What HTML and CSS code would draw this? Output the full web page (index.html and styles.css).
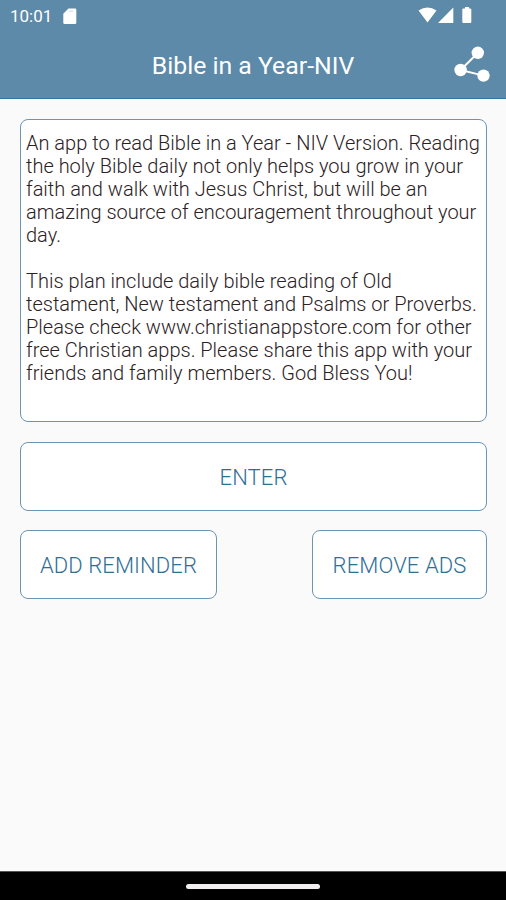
FILE: index.html
```
<!DOCTYPE html>
<html lang="en">
<head>
    <meta charset="UTF-8">
    <meta name="viewport" content="width=device-width, initial-scale=1.0">
    <title>Bible in a Year-NIV</title>
    <link rel="stylesheet" href="styles.css">
</head>
<body>
    <header class="header">
        <div class="status-bar">
            <span class="time">10:01</span>
            <svg class="sd-icon" width="14" height="17" viewBox="0 0 14 17">
                <path fill="#fff" d="M5.5 0.5H12q1.3 0 1.3 1.3v13q0 1.3-1.3 1.3H1.6q-1.3 0-1.3-1.3V5.7z"/>
                <path stroke="#b5c9d7" stroke-width="1" d="M7 2.5v1.5M9 2.5v1.5"/>
            </svg>
            <svg class="signal-icons" width="56" height="18" viewBox="0 0 56 18">
                <path fill="#fff" d="M0.5 3.5Q9.5-2.7 18.5 3.5L9.5 15.5z"/>
                <path fill="#fff" d="M35.3 0.5V16H20z"/>
                <path fill="#fff" d="M47 0h4v1.5h1.3q1 0 1 1V15q0 1-1 1h-7q-1 0-1-1V2.5q0-1 1-1h1.7z"/>
            </svg>
        </div>
        <div class="title-bar">
            <h1>Bible in a Year-NIV</h1>
            <button class="share-btn" aria-label="Share">
                <svg width="36" height="36" viewBox="0 0 36 36">
                    <path stroke="#fff" stroke-width="2" fill="none" d="M24 6.8L6.6 24L29.5 29.6"/>
                    <circle cx="23.8" cy="6.8" r="6.2" fill="#fff"/>
                    <circle cx="6.6" cy="24" r="6.2" fill="#fff"/>
                    <circle cx="29.5" cy="29.6" r="6.2" fill="#fff"/>
                </svg>
            </button>
        </div>
    </header>

    <main class="content">
        <div class="about">
            <p>
                An app to read Bible in a Year - NIV Version. Reading<br>
                the holy Bible daily not only helps you grow in your<br>
                faith and walk with Jesus Christ, but will be an<br>
                amazing source of encouragement throughout your<br>
                day.
            </p>
            <p>
                This plan include daily bible reading of Old<br>
                testament, New testament and Psalms or Proverbs.<br>
                Please check www.christianappstore.com for other<br>
                free Christian apps. Please share this app with your<br>
                friends and family members. God Bless You!
            </p>
        </div>
        <button class="btn">ENTER</button>
        <div class="btn-row">
            <button class="btn btn-reminder">ADD REMINDER</button>
            <button class="btn btn-ads">REMOVE ADS</button>
        </div>
    </main>

    <footer class="nav-bar">
        <div class="nav-handle"></div>
    </footer>
</body>
</html>
```
FILE: styles.css
```
* {
    box-sizing: border-box;
}

body {
    margin: 0;
    height: 100vh;
    display: flex;
    flex-direction: column;
    background-color: #fafafa;
    font-family: Roboto, sans-serif;
    overflow: hidden;
}

.header {
    height: 99px;
    background-color: #5d8aa9;
    border-bottom: 1px solid #36749b;
    color: #fff;
}

.status-bar {
    height: 32px;
    padding: 0 32px 0 10px;
    display: flex;
    align-items: center;
}

.time {
    width: 53px;
    font-size: 17px;
}

.signal-icons {
    margin-left: auto;
}

.title-bar {
    height: 64px;
    padding: 0 16px;
    display: grid;
    grid-template-columns: 36px 1fr 36px;
    align-items: center;
}

h1 {
    grid-column: 2;
    margin: 2px 0 0;
    font-size: 24.8px;
    font-weight: 400;
    text-align: center;
    white-space: nowrap;
}

.share-btn {
    padding: 0;
    border: none;
    background: none;
    display: flex;
    cursor: pointer;
}

.content {
    flex: 1;
    padding: 20px 19px 0 20px;
    display: flex;
    flex-direction: column;
}

.about {
    height: 303px;
    margin-bottom: 20px;
    padding: 12px 5px;
    background-color: #fff;
    border: 1px solid #6b95b3;
    border-radius: 8px;
    color: #2b211e;
    font-size: 20px;
    font-weight: 300;
    line-height: 23px;
    white-space: nowrap;
}

.about p {
    margin: 0 0 23px;
}

.btn {
    height: 69px;
    padding: 1px 0 0;
    background-color: #fff;
    border: 1px solid #6b95b3;
    border-radius: 8px;
    color: #2f6f96;
    font-family: inherit;
    font-size: 22px;
    font-weight: 300;
    letter-spacing: 0.1px;
    cursor: pointer;
}

.btn-row {
    margin-top: 19px;
    display: flex;
    justify-content: space-between;
}

.btn-reminder {
    width: 197px;
}

.btn-ads {
    width: 175px;
}

.nav-bar {
    height: 29px;
    background-color: #000;
    border-top: 1px solid #555;
    display: flex;
    justify-content: center;
    align-items: center;
}

.nav-handle {
    width: 134px;
    height: 5px;
    border-radius: 3px;
    background-color: #f0eeef;
}
```
